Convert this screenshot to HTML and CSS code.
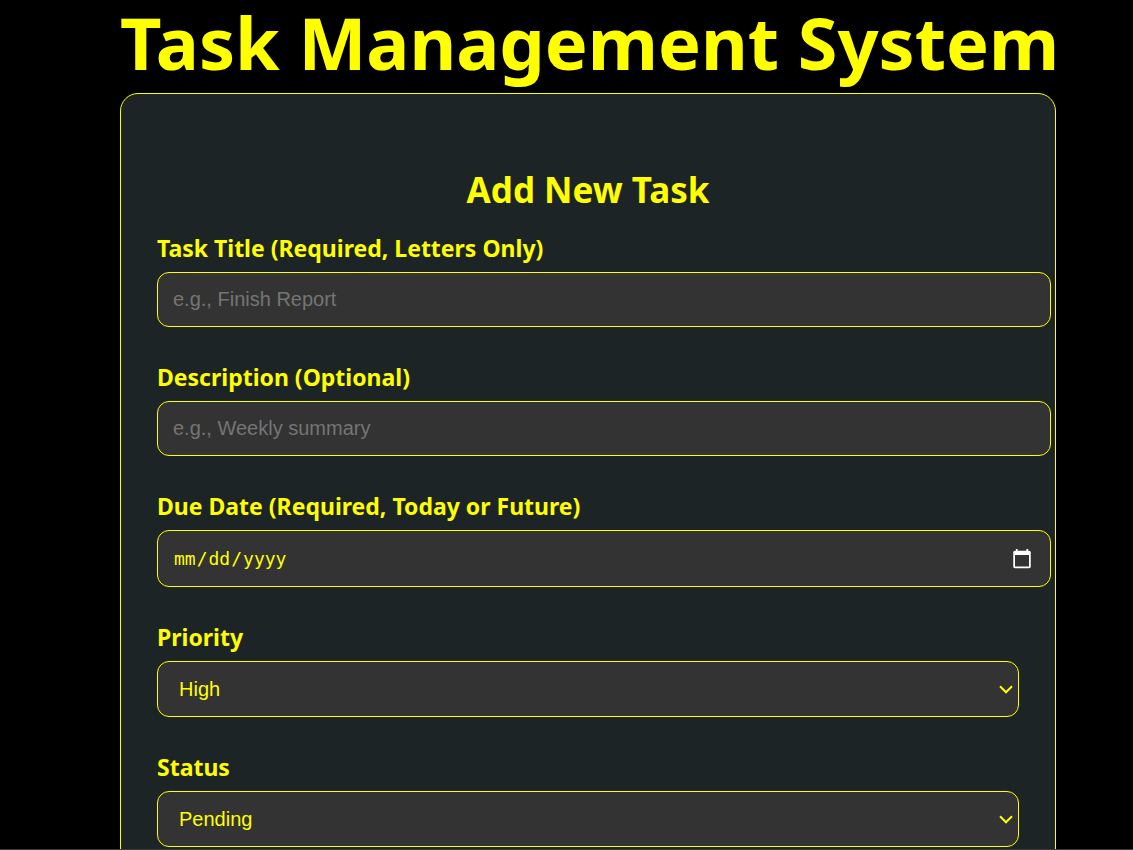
FILE: index.html
```html
<!DOCTYPE html>
<html lang="en-US">
<head>
<meta charset="utf-8">
<title>Task Management System</title>
<link rel="stylesheet" href="styles.css">
</head>
<body>
<main class="page">
  <h1 class="page-title">Task Management System</h1>
  <section class="card">
    <h2 class="card-title">Add New Task</h2>
    <form class="task-form">
      <div class="field">
        <label class="label" for="title">Task Title (Required, Letters Only)</label>
        <input class="input" id="title" type="text" placeholder="e.g., Finish Report">
      </div>
      <div class="field">
        <label class="label" for="description">Description (Optional)</label>
        <input class="input" id="description" type="text" placeholder="e.g., Weekly summary">
      </div>
      <div class="field">
        <label class="label" for="due">Due Date (Required, Today or Future)</label>
        <input class="input input-date" id="due" type="date">
      </div>
      <div class="field">
        <label class="label" for="priority">Priority</label>
        <select class="select" id="priority">
          <option>High</option>
          <option>Medium</option>
          <option>Low</option>
        </select>
      </div>
      <div class="field">
        <label class="label" for="status">Status</label>
        <select class="select" id="status">
          <option>Pending</option>
          <option>Completed</option>
        </select>
      </div>
    </form>
  </section>
</main>
</body>
</html>
```
FILE: styles.css
```css
body {
  margin: 0;
  height: 100vh;
  box-sizing: border-box;
  overflow: hidden;
  background: #000;
  border-bottom: 1px solid #3a3a3a;
  color: #ff0;
  font-family: "Segoe UI", "Noto Sans", sans-serif;
}

.page {
  padding: 0 77px 0 120px;
}

.page-title {
  margin: 0 0 9px;
  font-size: 72px;
  line-height: 84px;
  font-weight: 700;
  text-align: center;
  white-space: nowrap;
}

.card {
  padding: 72px 36px 36px;
  background: #1d2426;
  border: 1px solid #ff0;
  border-radius: 18px;
}

.card-title {
  margin: 0 0 18px;
  font-size: 35px;
  line-height: 48px;
  text-align: center;
}

.task-form {
  display: flex;
  flex-direction: column;
  gap: 34px;
}

.label {
  display: block;
  margin-bottom: 8px;
  font-size: 23px;
  line-height: 32px;
  font-weight: 700;
}

.input,
.select {
  display: block;
  width: 100%;
  margin: 0;
  border: 1px solid #ff0;
  border-radius: 12px;
  background-color: #333;
  color: #ff0;
  font-family: Arial, "Liberation Sans", sans-serif;
  font-size: 20px;
}

.input {
  height: 23px;
  padding: 15px;
}

.input::placeholder {
  color: #757575;
}

.input-date {
  height: 25px;
  font-family: "DejaVu Sans Mono", monospace;
  font-size: 18px;
  color-scheme: dark;
}

.input-date::-webkit-calendar-picker-indicator {
  width: 22px;
  height: 22px;
}

.select {
  box-sizing: border-box;
  height: 56px;
  padding: 0 32px 0 21px;
  appearance: none;
  background-image: url("data:image/svg+xml,%3Csvg xmlns='http://www.w3.org/2000/svg' width='14' height='9'%3E%3Cpath d='M1 1.3l6 6 6-6' fill='none' stroke='%23ff0' stroke-width='2'/%3E%3C/svg%3E");
  background-repeat: no-repeat;
  background-position: right 5px center;
}
```
